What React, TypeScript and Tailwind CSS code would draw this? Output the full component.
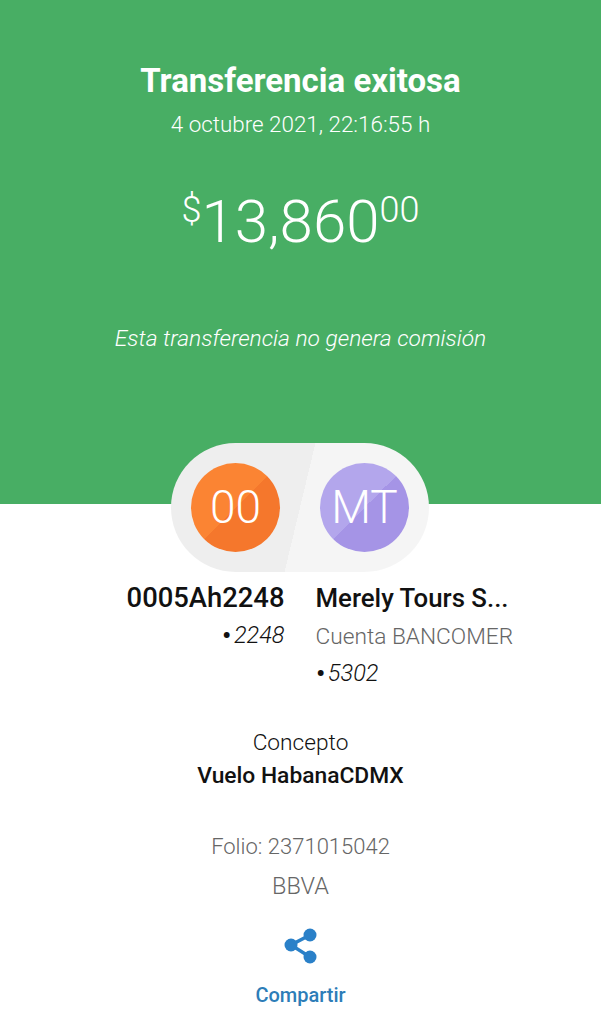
export default function App() {
  return (
    <div className="w-[601px] h-[1024px] bg-white overflow-hidden font-['Roboto',sans-serif] text-center">
      <div className="h-[504px] bg-[#48ae64] text-white flex flex-col items-center pt-[61px]">
        <h1 className="text-[33px] leading-[40px] font-bold">Transferencia exitosa</h1>
        <p className="mt-[9px] text-[22.4px] leading-[28px] font-light">4 octubre 2021, 22:16:55 h</p>
        <div className="mt-[46px] flex items-start font-light leading-none">
          <span className="text-[36px] mt-[8px]">$</span>
          <span className="text-[60px] leading-[76px]">13,860</span>
          <span className="text-[36px] mt-[8px]">00</span>
        </div>
        <p className="mt-[65px] text-[22.8px] leading-[28px] font-light italic">Esta transferencia no genera comisión</p>
      </div>

      <div className="-mt-[61px] ml-[171px] w-[258px] h-[129px] rounded-full bg-[linear-gradient(103.5deg,#eeeeee_50%,#f5f5f5_50%)] flex items-start justify-between pt-[20px] px-[20px]">
        <div className="w-[89px] h-[89px] rounded-full bg-[linear-gradient(135deg,#fb8433_50%,#f5772c_50%)] text-white text-[46px] font-light flex items-center justify-center">00</div>
        <div className="w-[89px] h-[89px] rounded-full bg-[linear-gradient(135deg,#b3a6ec_50%,#a594e6_50%)] text-white text-[46px] font-light flex items-center justify-center">MT</div>
      </div>

      <div className="mt-[8px] grid grid-cols-2">
        <div className="pr-[16px] text-right">
          <div className="text-[27.4px] leading-[36px] font-medium text-[#111]">0005Ah2248</div>
          <div className="mt-[3px] text-[23.5px] leading-[32px] italic font-light text-[#111]">
            <span className="text-[32px] leading-none not-italic align-[-3px] mr-[2px]">•</span>2248
          </div>
        </div>
        <div className="pl-[15px] text-left">
          <div className="text-[25.8px] leading-[36px] font-medium text-[#111]">Merely Tours S...</div>
          <div className="mt-[5px] text-[22.7px] leading-[32px] font-light text-[#666]">Cuenta BANCOMER</div>
          <div className="mt-[4px] text-[23.5px] leading-[32px] italic font-light text-[#111]">
            <span className="text-[32px] leading-none not-italic align-[-3px] mr-[2px]">•</span>5302
          </div>
        </div>
      </div>

      <div className="mt-[38px] text-[22.7px] leading-[32px] font-light text-[#111]">Concepto</div>
      <div className="mt-[1px] text-[22.8px] leading-[32px] font-medium text-[#111]">Vuelo HabanaCDMX</div>

      <div className="mt-[39px] text-[22px] leading-[32px] font-light text-[#666]">Folio: 2371015042</div>
      <div className="mt-[7px] text-[23.5px] leading-[32px] font-light text-[#666]">BBVA</div>

      <div className="mt-[26px] flex flex-col items-center">
        <svg width="34" height="36" viewBox="0 0 34 36" className="text-[#2a80c8]">
          <path d="M26 7 L7 17 L26 29" fill="none" stroke="currentColor" strokeWidth="3.5" />
          <circle cx="26" cy="7" r="6.5" fill="currentColor" />
          <circle cx="7" cy="17" r="6.5" fill="currentColor" />
          <circle cx="26" cy="29" r="6.5" fill="currentColor" />
        </svg>
        <div className="mt-[18px] text-[20px] leading-[26px] font-medium text-[#2d7db8]">Compartir</div>
      </div>
    </div>
  )
}
